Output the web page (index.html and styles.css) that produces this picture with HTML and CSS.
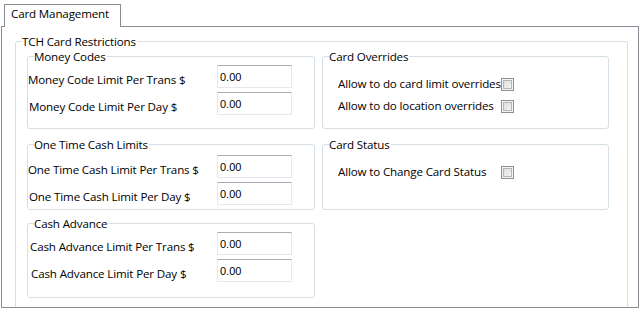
FILE: index.html
```html
<!DOCTYPE html>
<html lang="en">
<head>
  <meta charset="UTF-8">
  <meta name="viewport" content="width=device-width, initial-scale=1.0">
  <title>Card Management</title>
  <link rel="stylesheet" href="styles.css">
</head>
<body>
  <div class="tabs">
    <div class="tab">Card Management</div>
  </div>
  <div class="page">
    <fieldset class="group outer">
      <legend>TCH Card Restrictions</legend>
      <div class="grid">

        <!-- left column, row 1 -->
        <fieldset class="group money">
          <legend>Money Codes</legend>
          <div class="row"><label>Money Code Limit Per Trans $</label><input type="text" value="0.00"></div>
          <div class="row day"><label>Money Code Limit Per Day $</label><input type="text" value="0.00"></div>
        </fieldset>

        <fieldset class="group overrides">
          <legend>Card Overrides</legend>
          <div class="check"><label>Allow to do card limit overrides</label><input type="checkbox"></div>
          <div class="check"><label>Allow to do location overrides</label><input type="checkbox"></div>
        </fieldset>

        <!-- row 2 -->
        <fieldset class="group cash">
          <legend>One Time Cash Limits</legend>
          <div class="row"><label>One Time Cash Limit Per Trans $</label><input type="text" value="0.00"></div>
          <div class="row day"><label>One Time Cash Limit Per Day $</label><input type="text" value="0.00"></div>
        </fieldset>

        <fieldset class="group status">
          <legend>Card Status</legend>
          <div class="check"><label>Allow to Change Card Status</label><input type="checkbox"></div>
        </fieldset>

        <!-- row 3 -->
        <fieldset class="group advance">
          <legend>Cash Advance</legend>
          <div class="row"><label>Cash Advance Limit Per Trans $</label><input type="text" value="0.00"></div>
          <div class="row day"><label>Cash Advance Limit Per Day $</label><input type="text" value="0.00"></div>
        </fieldset>

      </div>
    </fieldset>
  </div>
</body>
</html>
```

FILE: styles.css
```css
body {
  margin: 0;
  width: 642px;
  height: 309px;
  overflow: hidden;
  background: #fff;
  color: #000;
  font-family: "Open Sans", "Noto Sans", sans-serif;
  font-size: 11.6px;
  letter-spacing: -0.15px;
}

/* tab strip */
.tabs {
  display: flex;
  padding: 4px 0 0 4px;
}
.tab {
  position: relative;
  z-index: 1;
  width: 117px;
  height: 23px;
  box-sizing: border-box;
  margin-bottom: -1px;
  padding: 1px 0 0 6px;
  border: 1px solid #898c95;
  border-bottom: none;
  background: #fff;
  line-height: 16px;
}
.page {
  width: 638px;
  height: 282px;
  box-sizing: border-box;
  margin-left: 1px;
  padding: 7px 0 0 13px;
  border: 1px solid #898c95;
  overflow: hidden;
}

/* group boxes */
.group {
  margin: 0;
  padding: 0;
  min-width: 0;
  border: 1px solid #d5dfe5;
  border-radius: 3px;
}
.group legend {
  margin-left: 6px;
  padding: 0 1px 0 0;
  line-height: 15px;
}
.outer {
  width: 613px;
  height: 320px;
  box-sizing: border-box;
}
.grid {
  display: grid;
  grid-template-columns: 288px 287px;
  column-gap: 7px;
  margin-left: 11px;
}
.money, .overrides { grid-row: 1; }
.cash, .status { grid-row: 2; margin-top: 8px; }
.advance { grid-row: 3; margin-top: 6px; }

.money { padding-bottom: 13px; }
.cash { padding-bottom: 4px; }
.advance { padding-bottom: 15px; }

/* label + textbox rows */
.row {
  display: grid;
  grid-template-columns: 189px 75px;
  align-items: end;
  margin-top: 1px;
}
.row.day { margin-top: 4px; }
.cash .row:first-of-type { margin-top: 3px; }
.row label {
  line-height: 16px;
  white-space: nowrap;
}
.row.day label { padding-left: 1px; }
.advance .row label { padding-left: 2px; }
.advance .row.day label { padding-left: 3px; }

.row input {
  width: 75px;
  height: 23px;
  box-sizing: border-box;
  margin: 0;
  padding: 0 2px;
  border: 1px solid #e3e9ef;
  border-top-color: #abadb3;
  border-radius: 0;
  font-family: "Liberation Sans", Arial, sans-serif;
  font-size: 11px;
  letter-spacing: 0;
  color: #000;
  background: #fff;
}

/* label + checkbox rows */
.check {
  display: grid;
  grid-template-columns: 163px 13px;
  align-items: center;
  height: 13px;
  margin-top: 9px;
  padding-left: 15px;
}
.check:first-of-type { margin-top: 12px; }
.check label {
  line-height: 16px;
  white-space: nowrap;
}
.check input {
  appearance: none;
  width: 13px;
  height: 13px;
  margin: 0;
  border: 1px solid #8e8f8f;
  box-shadow: inset 0 0 0 1px #f4f4f4, inset 0 0 0 2px #b2b6bb;
  background: linear-gradient(135deg, #d8d9db, #f7f7f7);
}
```
